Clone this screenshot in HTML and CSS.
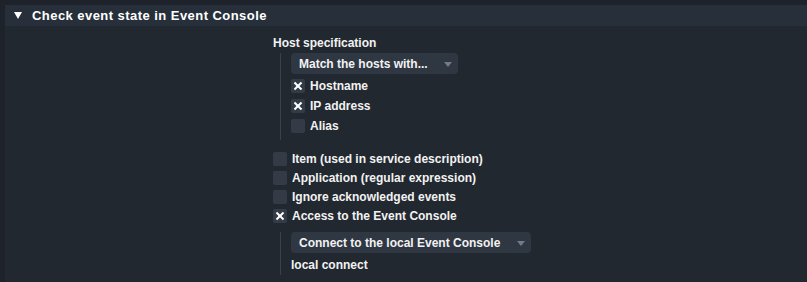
FILE: index.html
```html
<!DOCTYPE html>
<html lang="en">
<head>
    <meta charset="UTF-8">
    <title>Check event state in Event Console</title>
    <link rel="stylesheet" href="styles.css">
</head>
<body>
    <div class="foldable">
        <div class="fold-header">
            <span class="fold-arrow"></span>
            <span class="fold-title">Check event state in Event Console</span>
        </div>

        <div class="fold-body">
            <div class="form">
                <div class="label-row">Host specification</div>
                <div class="indent">
                    <div class="dropdown dd-hosts">
                        <span>Match the hosts with...</span>
                        <span class="dd-arrow"></span>
                    </div>
                    <div class="check-row"><span class="checkbox checked"></span>Hostname</div>
                    <div class="check-row"><span class="checkbox checked"></span>IP address</div>
                    <div class="check-row"><span class="checkbox"></span>Alias</div>
                </div>

                <div class="options">
                    <div class="check-row opt"><span class="checkbox"></span>Item (used in service description)</div>
                    <div class="check-row opt"><span class="checkbox"></span>Application (regular expression)</div>
                    <div class="check-row opt"><span class="checkbox"></span>Ignore acknowledged events</div>
                    <div class="check-row opt"><span class="checkbox checked"></span>Access to the Event Console</div>
                </div>

                <div class="indent second">
                    <div class="dropdown dd-connect">
                        <span>Connect to the local Event Console</span>
                        <span class="dd-arrow"></span>
                    </div>
                    <div class="label-row sub">local connect</div>
                </div>
            </div>
        </div>
    </div>
</body>
</html>
```

FILE: styles.css
```css
* {
    margin: 0;
    padding: 0;
    box-sizing: border-box;
}

html, body {
    height: 100%;
}

body {
    background-color: #1e222a;
    color: #f2f2f2;
    font-family: "Liberation Sans", Arial, sans-serif;
    font-size: 12px;
    font-weight: bold;
    overflow: hidden;
}

.foldable {
    margin: 5px 0 0 5px;
    height: calc(100% - 5px);
    display: flex;
    flex-direction: column;
}

.fold-header {
    height: 21px;
    background-color: #272f3a;
    display: flex;
    align-items: center;
    padding-left: 9px;
}

.fold-arrow {
    width: 0;
    height: 0;
    border-left: 4px solid transparent;
    border-right: 4px solid transparent;
    border-top: 7px solid #ffffff;
    margin-right: 10px;
}

.fold-title {
    font-size: 13px;
    color: #ffffff;
    letter-spacing: 0.45px;
}

.fold-body {
    flex: 1;
    background-color: #222830;
}

.form {
    padding: 10px 0 0 268px;
}

.label-row {
    height: 14px;
    line-height: 14px;
}

.indent {
    margin: 3px 0 0 7px;
    border-left: 1px solid #3a414c;
    padding: 0 0 4px 10px;
}

.dropdown {
    height: 21px;
    background-color: #2f3742;
    border-radius: 4px;
    display: flex;
    align-items: center;
    justify-content: space-between;
    padding: 0 6px 0 8px;
}

.dd-hosts {
    width: 167px;
    margin-bottom: 2px;
}

.dd-connect {
    width: 240px;
}

.dd-arrow {
    width: 0;
    height: 0;
    border-left: 4px solid transparent;
    border-right: 4px solid transparent;
    border-top: 5px solid #737b86;
    margin-top: 2px;
}

.check-row {
    height: 20px;
    display: flex;
    align-items: center;
}

.check-row.opt {
    height: 19px;
}

.checkbox {
    width: 14px;
    height: 14px;
    background-color: #343b46;
    border-radius: 2px;
    margin-right: 5px;
    position: relative;
}

.checkbox.checked::before,
.checkbox.checked::after {
    content: "";
    position: absolute;
    left: 2px;
    top: 6px;
    width: 10px;
    height: 2px;
    background-color: #ffffff;
}

.checkbox.checked::before {
    transform: rotate(45deg);
}

.checkbox.checked::after {
    transform: rotate(-45deg);
}

.options {
    margin-top: 9px;
}

.indent.second {
    margin-top: 7px;
    padding-bottom: 3px;
}

.label-row.sub {
    margin-top: 5px;
}
```
